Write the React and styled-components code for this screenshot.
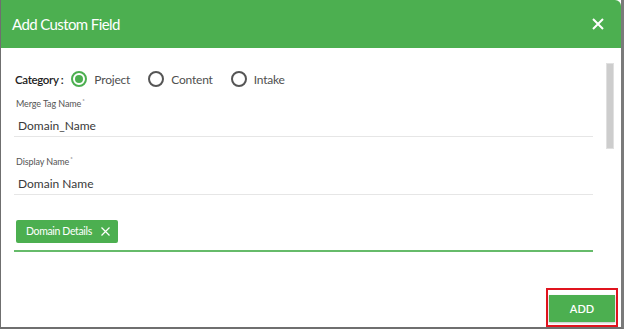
import React from 'react';
import styled, { createGlobalStyle } from 'styled-components';

const GlobalStyle = createGlobalStyle`
  html, body {
    margin: 0;
    padding: 0;
    background: #ffffff;
  }
  * { box-sizing: border-box; }
`;

const categories = [
  { label: 'Project', checked: true },
  { label: 'Content' },
  { label: 'Intake' },
];

const App = () => (
  <>
    <GlobalStyle />
    <Dialog>
      <Header>
        <Title>Add Custom Field</Title>
        <CloseButton aria-label="close">
          <svg width="12" height="12" viewBox="0 0 12 12">
            <path d="M1 1L11 11M11 1L1 11" stroke="#fff" strokeWidth="2" />
          </svg>
        </CloseButton>
      </Header>
      <Body>
        <Content>
          <CategoryRow>
            <CategoryLabel>Category :</CategoryLabel>
            {categories.map((c) => (
              <RadioOption key={c.label}>
                <Radio checked={c.checked} />
                <span>{c.label}</span>
              </RadioOption>
            ))}
          </CategoryRow>
          <Fields>
            <Field>
              <FieldLabel>Merge Tag Name<sup>*</sup></FieldLabel>
              <FieldValue>Domain_Name</FieldValue>
            </Field>
            <Field>
              <FieldLabel>Display Name<sup>*</sup></FieldLabel>
              <FieldValue>Domain Name</FieldValue>
            </Field>
          </Fields>
          <ChipArea>
            <Chip>
              Domain Details
              <svg width="9" height="9" viewBox="0 0 9 9">
                <path d="M0.5 0.5L8.5 8.5M8.5 0.5L0.5 8.5" stroke="#fff" strokeWidth="1.2" />
              </svg>
            </Chip>
          </ChipArea>
        </Content>
        <Scrollbar />
      </Body>
      <Footer>
        <Highlight>
          <AddButton>ADD</AddButton>
        </Highlight>
      </Footer>
    </Dialog>
  </>
);

const Dialog = styled.div`
  width: 624px;
  height: 329px;
  display: flex;
  flex-direction: column;
  background: #fff;
  border-left: 1px solid #6f6f6f;
  border-right: 3px solid #7a7a7a;
  border-bottom: 2px solid #6f6f6f;
  font-family: "Lato", "Noto Sans", sans-serif;
  overflow: hidden;
`;

const Header = styled.div`
  height: 48px;
  flex: none;
  background: #4caf50;
  border-top-right-radius: 6px;
  display: flex;
  align-items: center;
  justify-content: space-between;
  padding: 0 17px 0 11px;
`;

const Title = styled.h2`
  margin: 0;
  color: #fff;
  font-size: 15px;
  font-weight: 400;
  letter-spacing: -0.6px;
`;

const CloseButton = styled.button`
  border: 0;
  background: none;
  padding: 0;
  display: flex;
  cursor: pointer;
`;

const Body = styled.div`
  flex: 1;
  display: flex;
  padding: 15px 7px 0 13px;
`;

const Content = styled.div`
  flex: 1;
  padding-right: 13px;
`;

const CategoryRow = styled.div`
  display: flex;
  align-items: center;
  height: 32px;
  padding-left: 1px;
`;

const CategoryLabel = styled.span`
  font-size: 11.5px;
  font-weight: 600;
  letter-spacing: -0.35px;
  color: #222;
  margin-right: 8px;
`;

const RadioOption = styled.label`
  display: flex;
  align-items: center;
  gap: 7px;
  font-size: 12px;
  letter-spacing: -0.2px;
  color: #4f4f4f;
  margin-right: 18px;
`;

const Radio = styled.span`
  width: 16px;
  height: 16px;
  border-radius: 50%;
  border: 2px solid ${(p) => (p.checked ? '#4caf50' : '#555')};
  display: flex;
  align-items: center;
  justify-content: center;
  &::after {
    content: '';
    width: 8px;
    height: 8px;
    border-radius: 50%;
    background: ${(p) => (p.checked ? '#4caf50' : 'transparent')};
  }
`;

const Fields = styled.div`
  display: flex;
  flex-direction: column;
  gap: 18px;
  margin-top: 2px;
`;

const Field = styled.div`
  border-bottom: 1px solid #e6e6e6;
  padding-bottom: 2px;
`;

const FieldLabel = styled.div`
  font-size: 9px;
  color: #555;
  padding-left: 2px;
  letter-spacing: -0.1px;
  sup {
    font-size: 6px;
    margin-left: 1px;
  }
`;

const FieldValue = styled.div`
  font-size: 12px;
  color: #3a3a3a;
  padding: 9px 0 1px 4px;
`;

const ChipArea = styled.div`
  margin-top: 15px;
  padding: 9px 2px 7px;
  border-bottom: 2px solid #66bb6a;
`;

const Chip = styled.span`
  display: inline-flex;
  align-items: center;
  gap: 9px;
  height: 23px;
  padding: 0 8px 0 10px;
  background: #4caf50;
  border-radius: 2px;
  color: #fff;
  font-size: 10.5px;
  letter-spacing: -0.35px;
`;

const Scrollbar = styled.div`
  width: 8px;
  height: 86px;
  flex: none;
  background: #cdcdcd;
  border: 1px solid #e0e0e0;
`;

const Footer = styled.div`
  display: flex;
  justify-content: flex-end;
  padding: 0 3px 0 0;
`;

const Highlight = styled.div`
  border: 2px solid #e0141e;
  padding: 5px 1px 3px 1px;
`;

const AddButton = styled.button`
  width: 66px;
  height: 27px;
  border: 0;
  background: #4caf50;
  color: #fff;
  font-family: inherit;
  font-size: 11px;
  font-weight: 600;
  box-shadow: 0 1px 2px rgba(0, 0, 0, 0.25);
`;

export default App;
